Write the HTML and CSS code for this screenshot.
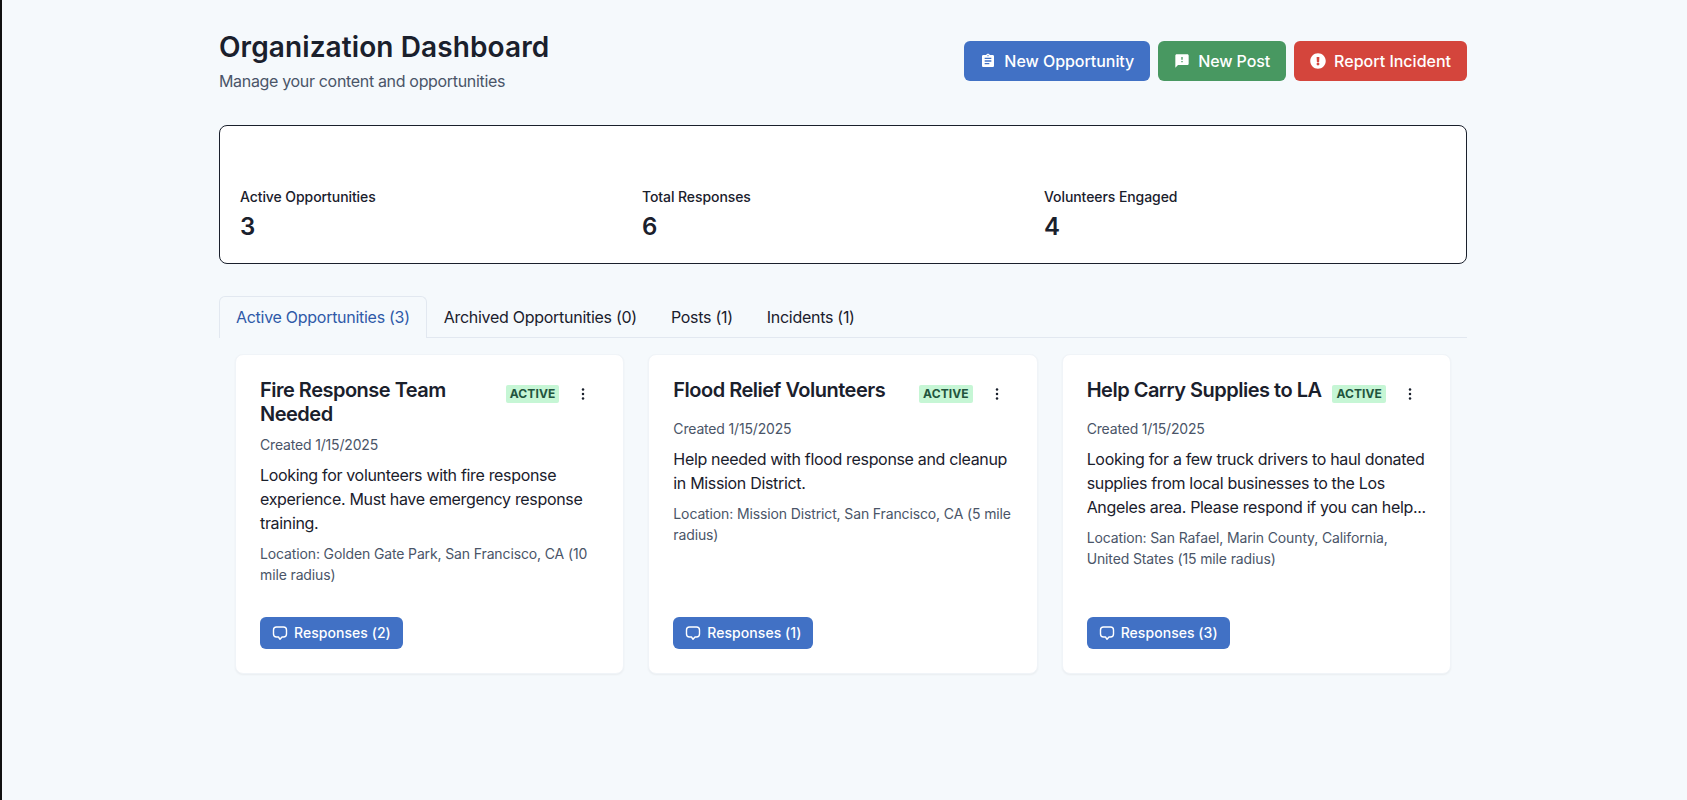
FILE: index.html
```html
<!DOCTYPE html>
<html lang="en">
<head>
<meta charset="utf-8">
<title>Organization Dashboard</title>
<link rel="stylesheet" href="styles.css">
</head>
<body>
<main class="container">
  <header class="page-header">
    <div class="page-heading">
      <h1 class="page-title">Organization Dashboard</h1>
      <p class="page-sub">Manage your content and opportunities</p>
    </div>
    <div class="actions">
      <button class="btn btn-blue"><svg class="btn-icon" viewBox="0 0 24 24"><path d="M19 3h-4.18C14.4 1.84 13.3 1 12 1c-1.3 0-2.4.84-2.82 2H5c-1.1 0-2 .9-2 2v14c0 1.1.9 2 2 2h14c1.1 0 2-.9 2-2V5c0-1.1-.9-2-2-2zm-7 0c.55 0 1 .45 1 1s-.45 1-1 1-1-.45-1-1 .45-1 1-1zm2 14H7v-2h7v2zm3-4H7v-2h10v2zm0-4H7V7h10v2z"/></svg>New Opportunity</button>
      <button class="btn btn-green"><svg class="btn-icon" viewBox="0 0 24 24"><path d="M20 2H4c-1.1 0-1.99.9-1.99 2L2 22l4-4h14c1.1 0 2-.9 2-2V4c0-1.1-.9-2-2-2zm-7 12h-2v-2h2v2zm0-4h-2V6h2v4z"/></svg>New Post</button>
      <button class="btn btn-red"><svg class="btn-icon" viewBox="0 0 512 512"><path d="M504 256c0 136.997-111.043 248-248 248S8 392.997 8 256C8 119.083 119.043 8 256 8s248 111.083 248 248zm-248 50c-25.405 0-46 20.595-46 46s20.595 46 46 46 46-20.595 46-46-20.595-46-46-46zm-43.673-165.346l7.418 136c.347 6.364 5.609 11.346 11.982 11.346h48.546c6.373 0 11.635-4.982 11.982-11.346l7.418-136c.375-6.874-5.098-12.654-11.982-12.654h-63.383c-6.884 0-12.356 5.78-11.981 12.654z"/></svg>Report Incident</button>
    </div>
  </header>

  <section class="stats">
    <div class="stat"><div class="stat-label">Active Opportunities</div><div class="stat-value">3</div></div>
    <div class="stat"><div class="stat-label">Total Responses</div><div class="stat-value">6</div></div>
    <div class="stat"><div class="stat-label">Volunteers Engaged</div><div class="stat-value">4</div></div>
  </section>

  <nav class="tabs">
    <div class="tab tab-active">Active Opportunities (3)</div>
    <div class="tab">Archived Opportunities (0)</div>
    <div class="tab">Posts (1)</div>
    <div class="tab">Incidents (1)</div>
  </nav>

  <section class="cards">
    <article class="card">
      <div class="card-head">
        <h2 class="card-title">Fire Response Team Needed</h2>
        <div class="card-tools">
          <span class="badge">Active</span>
          <button class="more" aria-label="More"><svg class="more-icon" viewBox="0 0 16 16"><circle cx="8" cy="3.5" r="1.25"/><circle cx="8" cy="8" r="1.25"/><circle cx="8" cy="12.5" r="1.25"/></svg></button>
        </div>
      </div>
      <p class="created">Created 1/15/2025</p>
      <p class="desc">Looking for volunteers with fire response experience. Must have emergency response training.</p>
      <p class="loc">Location: Golden Gate Park, San Francisco, CA (10 mile radius)</p>
      <button class="resp"><svg class="resp-icon" viewBox="0 0 16 16"><path d="M4.5 2h7a3 3 0 0 1 3 3v4a3 3 0 0 1-3 3H10L8 14.3 6.5 12h-2a3 3 0 0 1-3-3V5a3 3 0 0 1 3-3z"/></svg>Responses (2)</button>
    </article>
    <article class="card">
      <div class="card-head">
        <h2 class="card-title">Flood Relief Volunteers</h2>
        <div class="card-tools">
          <span class="badge">Active</span>
          <button class="more" aria-label="More"><svg class="more-icon" viewBox="0 0 16 16"><circle cx="8" cy="3.5" r="1.25"/><circle cx="8" cy="8" r="1.25"/><circle cx="8" cy="12.5" r="1.25"/></svg></button>
        </div>
      </div>
      <p class="created">Created 1/15/2025</p>
      <p class="desc">Help needed with flood response and cleanup in Mission District.</p>
      <p class="loc">Location: Mission District, San Francisco, CA (5 mile radius)</p>
      <button class="resp"><svg class="resp-icon" viewBox="0 0 16 16"><path d="M4.5 2h7a3 3 0 0 1 3 3v4a3 3 0 0 1-3 3H10L8 14.3 6.5 12h-2a3 3 0 0 1-3-3V5a3 3 0 0 1 3-3z"/></svg>Responses (1)</button>
    </article>
    <article class="card">
      <div class="card-head">
        <h2 class="card-title">Help Carry Supplies to LA</h2>
        <div class="card-tools">
          <span class="badge">Active</span>
          <button class="more" aria-label="More"><svg class="more-icon" viewBox="0 0 16 16"><circle cx="8" cy="3.5" r="1.25"/><circle cx="8" cy="8" r="1.25"/><circle cx="8" cy="12.5" r="1.25"/></svg></button>
        </div>
      </div>
      <p class="created">Created 1/15/2025</p>
      <p class="desc">Looking for a few truck drivers to haul donated supplies from local businesses to the Los Angeles area. Please respond if you can help...</p>
      <p class="loc">Location: San Rafael, Marin County, California, United States (15 mile radius)</p>
      <button class="resp"><svg class="resp-icon" viewBox="0 0 16 16"><path d="M4.5 2h7a3 3 0 0 1 3 3v4a3 3 0 0 1-3 3H10L8 14.3 6.5 12h-2a3 3 0 0 1-3-3V5a3 3 0 0 1 3-3z"/></svg>Responses (3)</button>
    </article>
  </section>
</main>
</body>
</html>
```
FILE: styles.css
```css
* { box-sizing: border-box; }
html, body { height: 100%; }
body {
  margin: 0;
  padding-right: 1px;
  background: #f5f9fc;
  box-shadow: inset 2px 0 0 #111;
  color: #1a202c;
  font-family: Inter, "Noto Sans", sans-serif;
  font-size: 16px;
  line-height: 1.5;
}
p, h1, h2 { margin: 0; }
button { font: inherit; border: 0; cursor: pointer; }

.container { width: 1280px; margin: 0 auto; padding: 32px 16px; }

.page-header { display: flex; justify-content: space-between; align-items: center; height: 58px; margin-bottom: 35px; }
.page-heading { align-self: flex-start; }
.page-title { font-size: 28px; line-height: 30px; font-weight: 600; letter-spacing: .1px; margin-bottom: 7px; }
.page-sub { color: #4a5568; font-size: 16px; line-height: 24px; letter-spacing: -.33px; }

.actions { display: flex; gap: 8px; }
.btn {
  display: inline-flex; align-items: center; gap: 8px;
  height: 40px; padding: 0 16px 1px; border-radius: 6px;
  color: #fff; font-size: 16px; font-weight: 500;
}
.btn-icon { width: 16px; height: 16px; fill: #fff; }
.btn-blue { background: #4171c5; letter-spacing: -.05px; }
.btn-green { background: #489861; letter-spacing: -.1px; }
.btn-red { background: #d4453c; }

.stats {
  display: grid; grid-template-columns: repeat(3, 1fr); align-items: end;
  height: 139px; padding: 20px 20px 18px;
  background: #fff; border: 1px solid #1a202c; border-radius: 8px;
  margin-bottom: 32px;
}
.stat-label { font-size: 14px; line-height: 20px; font-weight: 450; letter-spacing: -.08px; }
.stat-value { font-size: 24px; line-height: 36px; font-weight: 570; margin-top: 2px; }

.tabs { display: flex; border-bottom: 1px solid #e2e8f0; height: 42px; }
.tab { padding: 8px 16px; height: 42px; line-height: 24px; border: 1px solid transparent; border-bottom: 0; letter-spacing: -.28px; }
.tab-active {
  color: #2f5aa8; border-color: #e2e8f0; border-radius: 6px 6px 0 0;
  background: #f5f9fc; position: relative;
}

.cards { display: grid; grid-template-columns: repeat(3, 1fr); gap: 24px; padding: 16px; }
.card {
  display: flex; flex-direction: column; height: 320px; padding: 23px 24px 24px;
  background: #fff; border: 1px solid #f0f4f8; border-radius: 8px;
  box-shadow: 0 1px 2px rgba(0,0,0,.05);
}
.card-head { display: flex; align-items: flex-start; justify-content: space-between; gap: 8px; margin-bottom: 8px; }
.card-title { flex: 1; font-size: 20px; line-height: 24px; font-weight: 600; letter-spacing: -.5px; }
.card-tools { display: flex; align-items: center; gap: 8px; flex: none; }
.badge {
  padding: 0 4px; border-radius: 2px;
  background: #c6f6d5; color: #22543d; font-size: 12px; line-height: 18px; font-weight: 700;
  letter-spacing: .1px; text-transform: uppercase;
}
.more { display: flex; align-items: center; justify-content: center; width: 32px; height: 32px; padding: 0; background: transparent; }
.more-icon { width: 16px; height: 16px; fill: #1a202c; }
.created { color: #4a5568; font-size: 14px; line-height: 21px; margin-bottom: 8px; letter-spacing: -.17px; }
.desc { font-size: 16px; line-height: 24px; margin-bottom: 8px; letter-spacing: -.33px; }
.loc { color: #4a5568; font-size: 14px; line-height: 21px; letter-spacing: -.13px; }
.resp {
  display: inline-flex; align-items: center; gap: 6px; align-self: flex-start;
  margin-top: auto; height: 32px; padding: 0 12px 1px; border-radius: 6px;
  background: #4171c5; color: #fff; font-size: 14px; font-weight: 550; letter-spacing: .05px;
}
.resp-icon { width: 16px; height: 16px; fill: none; stroke: #fff; stroke-width: 1.4; stroke-linejoin: round; }
```
